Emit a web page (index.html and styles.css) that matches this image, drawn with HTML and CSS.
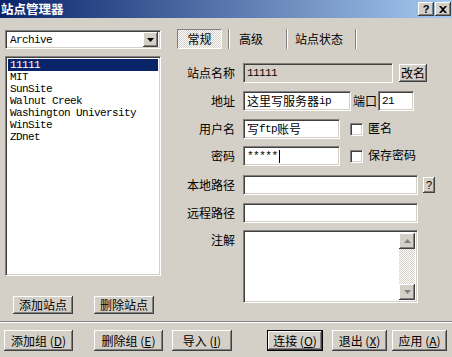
FILE: index.html
```html
<!DOCTYPE html>
<html lang="zh-CN">
<head>
    <meta charset="UTF-8">
    <title>站点管理器</title>
    <link rel="stylesheet" href="styles.css">
</head>
<body>
    <div class="titlebar">
        <span class="title">站点管理器</span>
        <span class="caption-btns">
            <span class="cap-btn">?</span>
            <span class="cap-btn">
                <svg width="8" height="7" viewBox="0 0 8 7"><path d="M0 0h2l2 2 2-2h2L5 3.5 8 7H6L4 5 2 7H0l3-3.5z" fill="#000"/></svg>
            </span>
        </span>
    </div>

    <div class="main">
        <div class="left">
            <div class="combo">
                <span class="combo-text">Archive</span>
                <span class="combo-arrow">
                    <svg width="7" height="4" viewBox="0 0 7 4"><path d="M0 0h7L3.5 4z" fill="#000"/></svg>
                </span>
            </div>
            <ul class="sites">
                <li class="selected">11111</li>
                <li>MIT</li>
                <li>SunSite</li>
                <li>Walnut Creek</li>
                <li>Washington University</li>
                <li>WinSite</li>
                <li>ZDnet</li>
            </ul>
            <div class="left-btns">
                <button class="btn btn-add">添加站点</button>
                <button class="btn btn-del">删除站点</button>
            </div>
        </div>

        <div class="right">
            <div class="tabs">
                <span class="tab tab-active">常规</span>
                <span class="tab-sep"></span>
                <span class="tab tab-adv">高级</span>
                <span class="tab-sep"></span>
                <span class="tab tab-status">站点状态</span>
                <span class="tab-sep"></span>
            </div>

            <div class="form">
                <div class="row row-name">
                    <label class="lbl">站点名称</label>
                    <span class="field field-disabled w-name mono">11111</span>
                    <button class="btn btn-rename">改名</button>
                </div>
                <div class="row row-host">
                    <label class="lbl">地址</label>
                    <span class="field w-host">这里写服务器<span class="mono">ip</span></span>
                    <label class="port-lbl">端口</label>
                    <span class="field w-port mono">21</span>
                </div>
                <div class="row row-user">
                    <label class="lbl">用户名</label>
                    <span class="field w-short">写<span class="mono">ftp</span>账号</span>
                    <span class="check"></span>
                    <span class="check-lbl">匿名</span>
                </div>
                <div class="row row-pass">
                    <label class="lbl">密码</label>
                    <span class="field w-short mono stars">*****<span class="caret"></span></span>
                    <span class="check"></span>
                    <span class="check-lbl">保存密码</span>
                </div>
                <div class="row row-local">
                    <label class="lbl">本地路径</label>
                    <span class="field w-long"></span>
                    <button class="btn btn-help">?</button>
                </div>
                <div class="row row-remote">
                    <label class="lbl">远程路径</label>
                    <span class="field w-long"></span>
                </div>
                <div class="row row-note">
                    <label class="lbl">注解</label>
                    <div class="field w-long memo">
                        <div class="scrollbar">
                            <span class="sb-btn">
                                <svg width="7" height="4" viewBox="0 0 7 4"><path d="M0 4h7L3.5 0z" fill="#808080"/></svg>
                            </span>
                            <span class="sb-track"></span>
                            <span class="sb-btn">
                                <svg width="7" height="4" viewBox="0 0 7 4"><path d="M0 0h7L3.5 4z" fill="#808080"/></svg>
                            </span>
                        </div>
                    </div>
                </div>
            </div>
        </div>
    </div>

    <div class="separator"></div>

    <div class="bottom">
        <button class="btn b-addgrp">添加组 (<u>D</u>)</button>
        <button class="btn b-delgrp">删除组 (<u>E</u>)</button>
        <button class="btn b-import">导入 (<u>I</u>)</button>
        <button class="btn b-connect">连接 (<u>O</u>)</button>
        <button class="btn b-quit">退出 (<u>X</u>)</button>
        <button class="btn b-apply">应用 (<u>A</u>)</button>
    </div>
</body>
</html>
```

FILE: styles.css
```css
body {
    margin: 0;
    width: 452px;
    height: 357px;
    overflow: hidden;
    background-color: #d4d0c8;
    font-family: "Noto Sans CJK SC", sans-serif;
    font-size: 12px;
    line-height: 14px;
    color: #000;
}

.mono {
    font-family: "Liberation Mono", monospace;
    font-size: 11px;
    letter-spacing: -0.6px;
}

/* title bar */
.titlebar {
    height: 18px;
    display: flex;
    align-items: center;
    justify-content: space-between;
    background: linear-gradient(to right, #0a246a, #a6caf0);
}

.title {
    color: white;
    font-weight: bold;
    font-size: 12.5px;
    padding-left: 1px;
}

.caption-btns {
    display: flex;
    gap: 1px;
    padding-right: 1px;
}

.cap-btn {
    width: 16px;
    height: 14px;
    box-sizing: border-box;
    display: flex;
    align-items: center;
    justify-content: center;
    background-color: #d4d0c8;
    font-family: "Liberation Sans", sans-serif;
    font-weight: bold;
    font-size: 11px;
    box-shadow: inset -1px -1px #404040, inset 1px 1px #fff, inset -2px -2px #808080;
}

/* shared 3d borders */
.btn {
    margin: 0;
    padding: 0;
    font: inherit;
    color: #000;
    background-color: #d4d0c8;
    border: none;
    box-shadow: inset -1px -1px #404040, inset 1px 1px #fff, inset -2px -2px #808080, inset 2px 2px #d4d0c8;
    display: flex;
    align-items: center;
    justify-content: center;
}

.field,
.combo,
.sites {
    box-sizing: border-box;
    background-color: white;
    border: 1px solid;
    border-color: #808080 #fff #fff #808080;
    box-shadow: inset 1px 1px #404040, inset -1px -1px #d4d0c8;
}

/* main area */
.main {
    display: flex;
    height: 303px;
}

.left {
    width: 156px;
    padding-left: 5px;
    padding-top: 12px;
}

.combo {
    height: 19px;
    display: flex;
    align-items: center;
    justify-content: space-between;
    padding: 2px;
}

.combo-text {
    font-family: "Liberation Mono", monospace;
    font-size: 11px;
    letter-spacing: -0.6px;
    padding-left: 2px;
}

.combo-arrow {
    width: 15px;
    height: 15px;
    display: flex;
    align-items: center;
    justify-content: center;
    background-color: #d4d0c8;
    box-shadow: inset -1px -1px #404040, inset 1px 1px #fff, inset -2px -2px #808080;
}

.sites {
    list-style: none;
    margin: 7px 0 0;
    padding: 2px;
    height: 220px;
    font-family: "Liberation Mono", monospace;
    font-size: 11px;
    letter-spacing: -0.6px;
}

.sites li {
    height: 12px;
    line-height: 12px;
    padding-left: 2px;
}

.sites li.selected {
    background-color: #0a246a;
    color: white;
}

.left-btns {
    display: flex;
    margin-top: 20px;
}

.left-btns .btn {
    width: 60px;
    height: 18px;
}

.btn-add {
    margin-left: 8px;
}

.btn-del {
    margin-left: 21px;
}

/* tabs */
.right {
    flex: 1;
}

.tabs {
    display: flex;
    align-items: center;
    height: 20px;
    margin-top: 11px;
    padding-left: 16px;
}

.tab {
    height: 20px;
    line-height: 20px;
}

.tab-active {
    width: 45px;
    box-sizing: border-box;
    text-align: center;
    border: 1px solid;
    border-color: #808080 #fff #fff #808080;
    line-height: 18px;
    background: repeating-conic-gradient(#fff 0 25%, #d4d0c8 0 50%) 0 0 / 2px 2px;
}

.tab-sep {
    width: 0;
    height: 20px;
    border-left: 1px solid #808080;
    border-right: 1px solid #fff;
    margin-left: 6px;
}

.tab-adv {
    width: 41px;
    padding-left: 9px;
}

.tab-status {
    width: 54px;
    padding-left: 7px;
}

/* form */
.form {
    margin-top: 14px;
}

.row {
    display: flex;
    align-items: center;
    height: 20px;
}

.lbl {
    width: 74px;
    text-align: right;
    margin-right: 8px;
}

.field {
    height: 20px;
    padding: 2px 3px;
    display: flex;
    align-items: center;
    white-space: nowrap;
}

.field-disabled {
    background-color: #d4d0c8;
}

.w-name { width: 150px; }
.w-host { width: 108px; }
.w-port { width: 36px; }
.w-short { width: 97px; }
.w-long { width: 175px; }

.btn-rename {
    width: 28px;
    height: 18px;
    margin-left: 6px;
}

.port-lbl {
    margin: 0 1px 0 2px;
}

.check {
    width: 13px;
    height: 13px;
    box-sizing: border-box;
    margin-left: 10px;
    background-color: white;
    border: 1px solid;
    border-color: #808080 #fff #fff #808080;
    box-shadow: inset 1px 1px #404040, inset -1px -1px #d4d0c8;
}

.check-lbl {
    margin-left: 5px;
    margin-top: -2px;
}

.stars {
    letter-spacing: -0.5px;
}

.caret {
    width: 1px;
    height: 13px;
    margin-left: 1px;
    background-color: #000;
}

.btn-help {
    width: 12px;
    height: 16px;
    margin-left: 5px;
    font-family: "Liberation Sans", sans-serif;
    font-size: 11px;
}

.row-host { margin-top: 8px; }
.row-user { margin-top: 8px; }
.row-pass { margin-top: 7px; }
.row-local { margin-top: 9px; }
.row-remote { margin-top: 8px; }

.row-note {
    margin-top: 7px;
    height: 73px;
    align-items: flex-start;
}

.row-note .lbl {
    margin-top: 3px;
}

.memo {
    height: 73px;
    padding: 2px;
    justify-content: flex-end;
    align-items: stretch;
}

.scrollbar {
    width: 16px;
    display: flex;
    flex-direction: column;
}

.sb-btn {
    height: 16px;
    display: flex;
    align-items: center;
    justify-content: center;
    background-color: #d4d0c8;
    box-shadow: inset -1px -1px #404040, inset 1px 1px #fff, inset -2px -2px #808080;
}

.sb-track {
    flex: 1;
    background: repeating-conic-gradient(#fff 0 25%, #d4d0c8 0 50%) 0 0 / 2px 2px;
}

/* bottom */
.separator {
    height: 0;
    border-top: 1px solid #808080;
    border-bottom: 1px solid #fff;
}

.bottom {
    display: flex;
    padding-top: 7px;
}

.bottom .btn {
    height: 21px;
}

.b-addgrp { width: 69px; margin-left: 4px; }
.b-delgrp { width: 69px; margin-left: 21px; }
.b-import { width: 60px; margin-left: 9px; }
.b-connect {
    width: 56px;
    margin-left: 35px;
    outline: 1px solid #000;
    outline-offset: -1px;
    box-shadow: inset -2px -2px #404040, inset 2px 2px #fff, inset -3px -3px #808080;
}
.b-quit { width: 55px; margin-left: 9px; }
.b-apply { width: 55px; margin-left: 5px; }
```
